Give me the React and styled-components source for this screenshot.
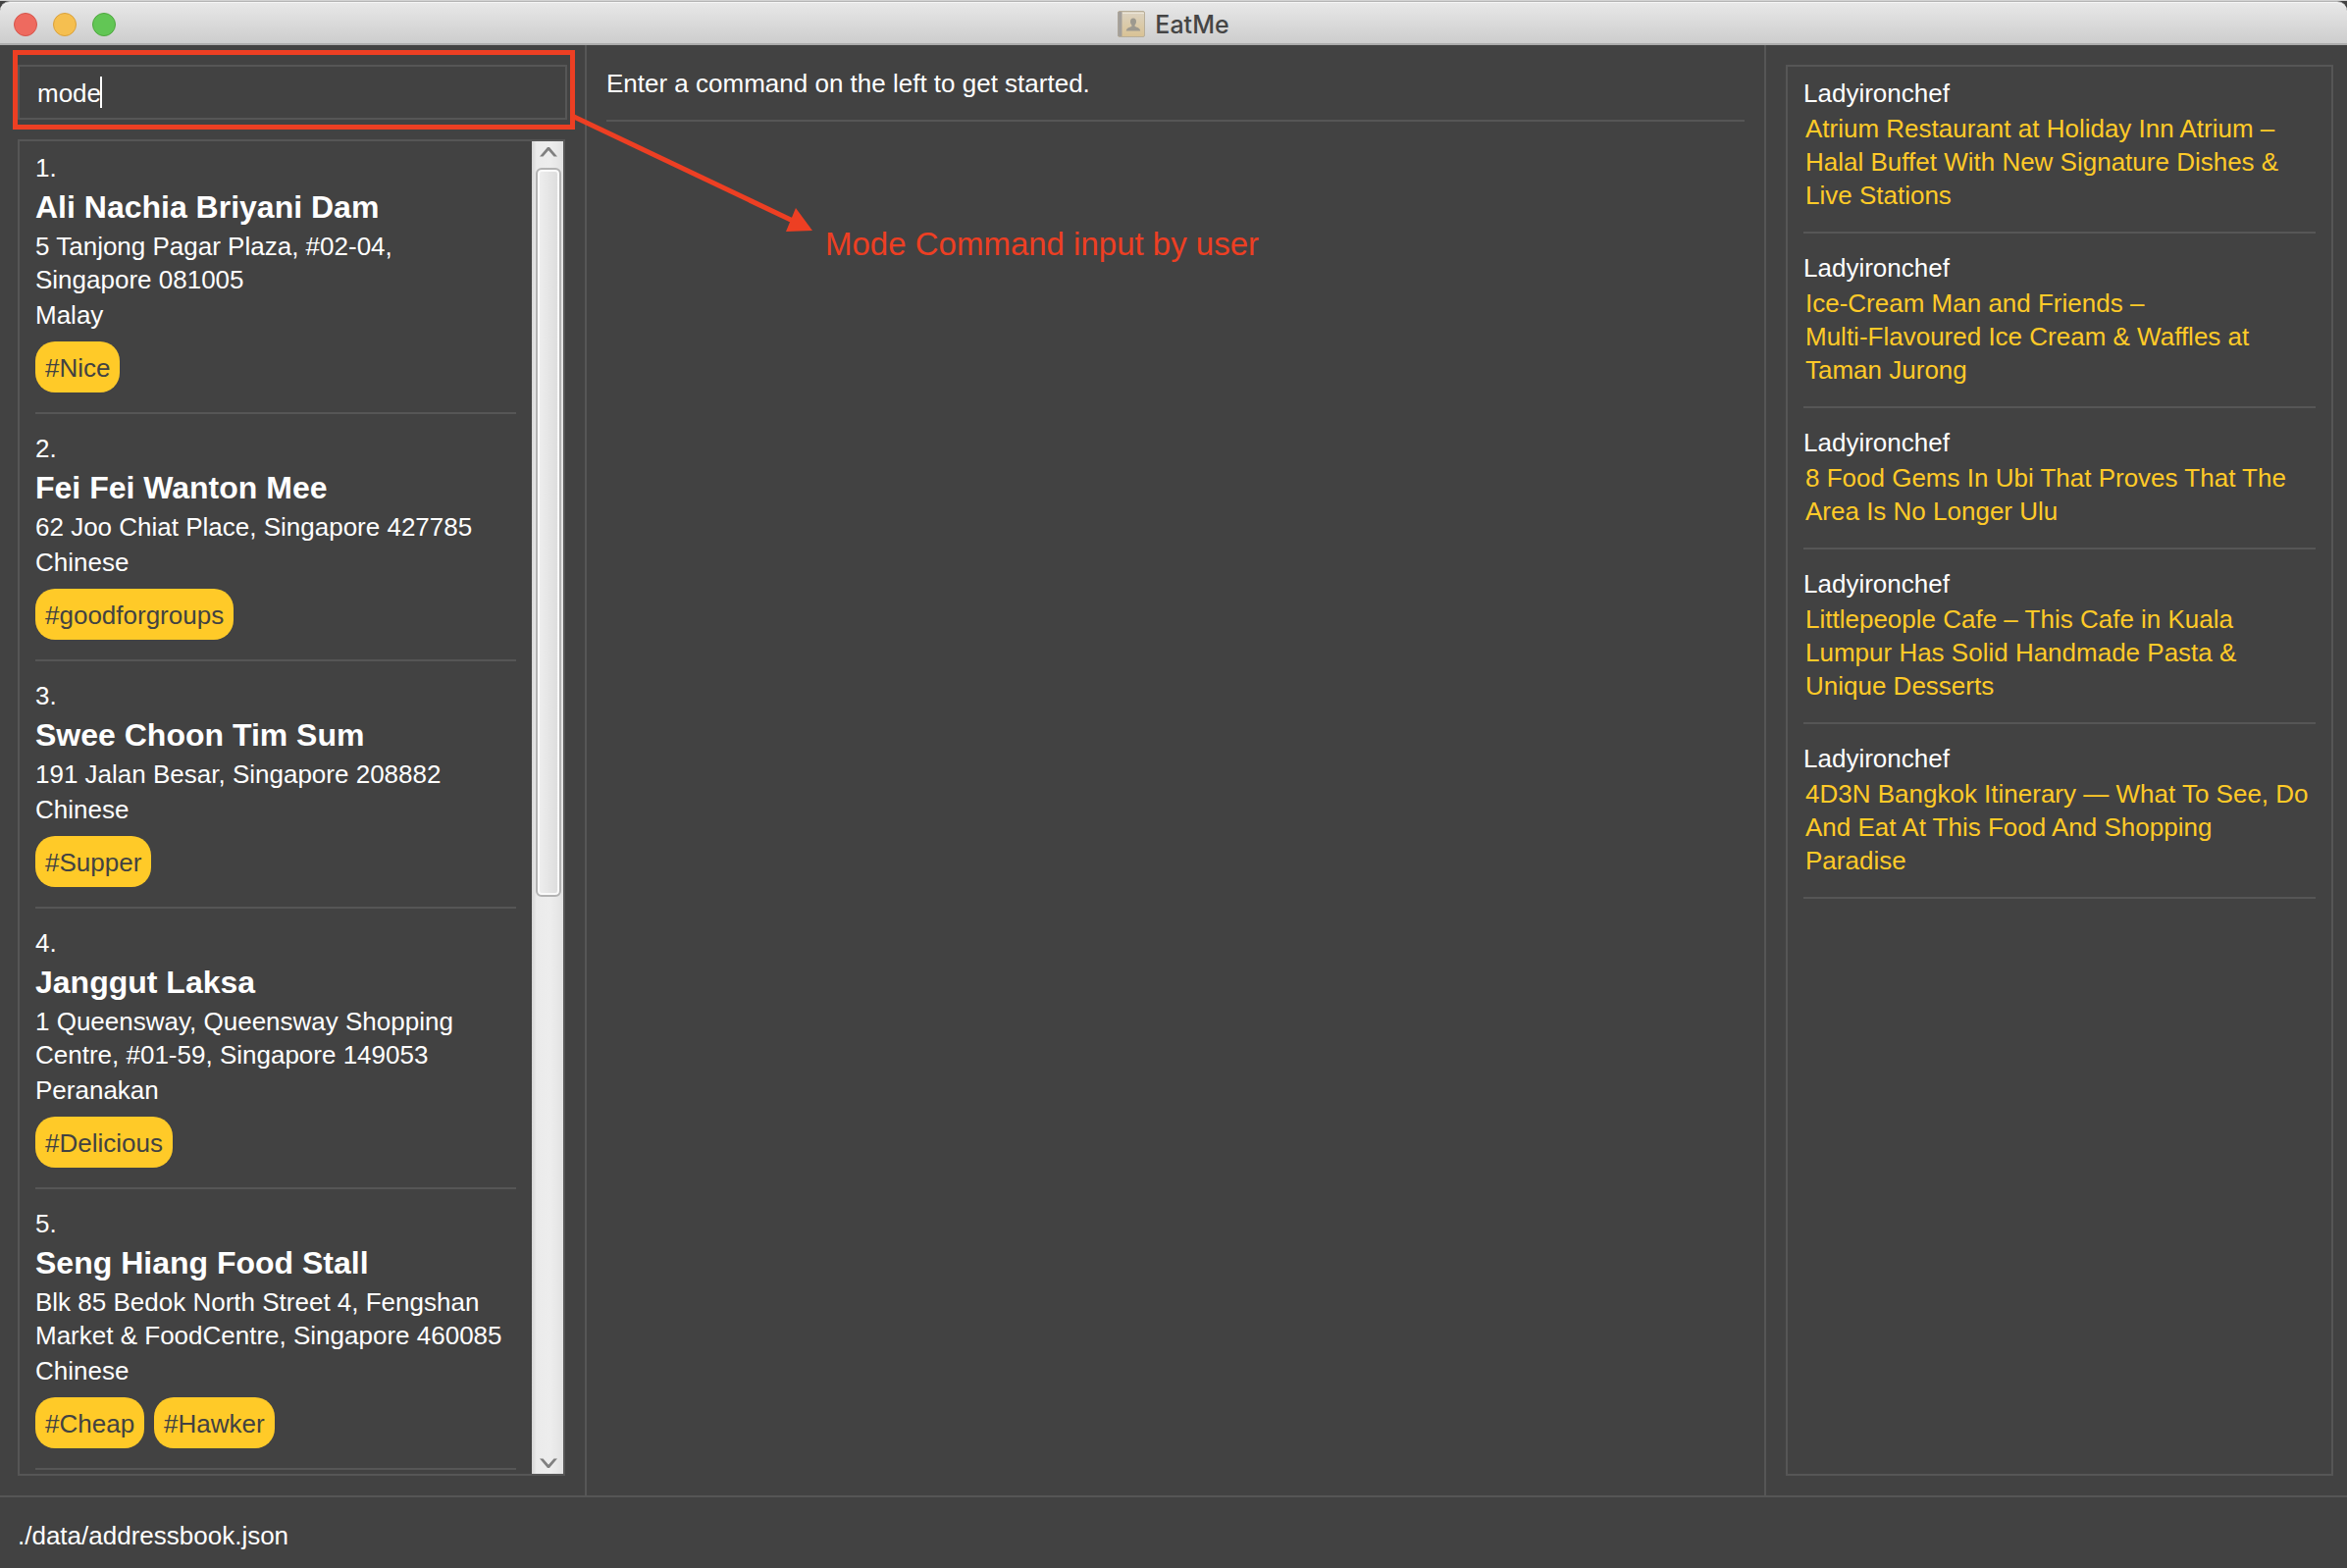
import React from "react";
import styled, { createGlobalStyle } from "styled-components";

const line = "#565656";
const red = "#ed3f23";
const amber = "#ffca28";

const GlobalStyle = createGlobalStyle`
  *, *::before, *::after { box-sizing: border-box; }
  html, body, #root { height: 100%; }
  body {
    margin: 0;
    background: #424242;
    color: #fff;
    font: 26px/34px "Liberation Sans", Arial, sans-serif;
    overflow: hidden;
  }
  ul, ol, p, h1, h2 { margin: 0; padding: 0; list-style: none; }
`;

const Window = styled.div`
  position: relative;
  display: flex;
  flex-direction: column;
  height: 100%;
  border-top: 1px solid #d2d2d2;
`;

const TitleBar = styled.header`
  display: grid;
  grid-template-columns: 1fr auto 1fr;
  align-items: center;
  height: 45px;
  padding: 3px 14px 0;
  background: linear-gradient(#e8e8e8, #cdcdcd);
  border-top: 1px solid #b4b4b4;
  border-bottom: 2px solid #acacac;
  border-radius: 10px 10px 0 0;
  box-shadow: inset 0 1px #f6f6f6;
`;

const Lights = styled.div`
  display: flex;
  gap: 16px;
`;

const Light = styled.button`
  width: 24px;
  height: 24px;
  padding: 0;
  border: 1px solid ${(p) => p.$edge};
  border-radius: 50%;
  background: ${(p) => p.$fill};
`;

const Title = styled.h1`
  display: flex;
  align-items: center;
  gap: 10px;
  color: #454545;
  font: 500 25px/34px Inter, sans-serif;
`;

const Columns = styled.main`
  flex: 1;
  min-height: 0;
  display: grid;
  grid-template-columns: 598fr 1202fr 592fr;
`;

const Column = styled.section`
  display: flex;
  flex-direction: column;
  min-width: 0;
  min-height: 0;
  padding: 20px ${(p) => p.$right}px 20px ${(p) => p.$left}px;
  border-right: ${(p) => (p.$last ? 0 : 2)}px solid ${line};
`;

const CommandField = styled.div`
  position: relative;
  margin-bottom: 20px;
`;

const CommandInput = styled.input`
  display: block;
  width: calc(100% + 2px);
  height: 56px;
  padding: 2px 18px 0;
  border: 2px solid ${line};
  outline: 0;
  background: transparent;
  caret-color: transparent;
  color: #fff;
  font: inherit;
`;

const Caret = styled.span`
  position: absolute;
  left: 84px;
  top: 12px;
  width: 2px;
  height: 32px;
  background: #fff;
`;

const Highlight = styled.div`
  position: absolute;
  inset: -15px -10px -10px -5px;
  border: 5px solid ${red};
  pointer-events: none;
`;

const Panel = styled.div`
  flex: 1;
  min-height: 0;
  display: flex;
  border: 2px solid ${line};
`;

const List = styled.ol`
  flex: 1;
  min-width: 0;
  overflow: hidden;
`;

const Item = styled.li`
  display: flex;
  flex-direction: column;
  gap: 2px;
  padding: 10px 16px 8px;
`;

const Name = styled.h2`
  font-size: 32px;
  line-height: 42px;
`;

const Address = styled.p`
  white-space: pre-line;
`;

const Tags = styled.ul`
  display: flex;
  gap: 10px;
  margin-top: 8px;
`;

const Tag = styled.li`
  padding: 10px 10px 8px;
  border-radius: 20px;
  background: ${amber};
  color: #424242;
`;

const Rule = styled.hr`
  width: 100%;
  height: 2px;
  margin: 18px 0 0;
  border: 0;
  background: ${line};
`;

const Result = styled.div`
  display: flex;
  flex-direction: column;
  gap: 2px;
  padding-top: 2px;
`;

const FeedLink = styled.a`
  padding: 0 2px;
  color: ${amber};
  text-decoration: none;
  white-space: pre-line;
`;

const ScrollBar = styled.div`
  display: flex;
  flex-direction: column;
  width: 32px;
  padding: 0 2px 0 4px;
  background: linear-gradient(90deg, #d4d4d4, #ebebeb 15%, #ededed 60%, #e2e2e2);
`;

const ScrollButton = styled.button`
  display: flex;
  align-items: ${(p) => (p.$down ? "flex-end" : "flex-start")};
  justify-content: center;
  width: 100%;
  height: 27px;
  padding: 6px 0;
  border: 0;
  background: none;
`;

const Track = styled.div`
  flex: 1;
`;

const Thumb = styled.div`
  height: 57%;
  border: 2px solid #b2b2b2;
  border-radius: 6px;
  background: linear-gradient(90deg, #efefef, #dcdcdc);
  box-shadow: inset 0 0 0 2px #fafafa;
`;

const StatusBar = styled.footer`
  height: 74px;
  padding: 22px 18px;
  border-top: 2px solid ${line};
`;

const Annotation = styled.div`
  position: absolute;
  left: 585px;
  top: 114px;
  display: flex;
  pointer-events: none;
`;

const Note = styled.p`
  margin: 114px 0 0 10px;
  color: ${red};
  font-size: 33px;
  line-height: 40px;
  white-space: nowrap;
`;

const places = [
  { name: "Ali Nachia Briyani Dam", address: "5 Tanjong Pagar Plaza, #02-04,\nSingapore 081005", kind: "Malay", tags: ["Nice"] },
  { name: "Fei Fei Wanton Mee", address: "62 Joo Chiat Place, Singapore 427785", kind: "Chinese", tags: ["goodforgroups"] },
  { name: "Swee Choon Tim Sum", address: "191 Jalan Besar, Singapore 208882", kind: "Chinese", tags: ["Supper"] },
  { name: "Janggut Laksa", address: "1 Queensway, Queensway Shopping Centre, #01-59, Singapore 149053", kind: "Peranakan", tags: ["Delicious"] },
  { name: "Seng Hiang Food Stall", address: "Blk 85 Bedok North Street 4, Fengshan Market & FoodCentre, Singapore 460085", kind: "Chinese", tags: ["Cheap", "Hawker"] },
];

const articles = [
  "Atrium Restaurant at Holiday Inn Atrium – Halal Buffet With New Signature Dishes & Live Stations",
  "Ice-Cream Man and Friends –\nMulti-Flavoured Ice Cream & Waffles at Taman Jurong",
  "8 Food Gems In Ubi That Proves That The Area Is No Longer Ulu",
  "Littlepeople Cafe – This Cafe in Kuala Lumpur Has Solid Handmade Pasta & Unique Desserts",
  "4D3N Bangkok Itinerary — What To See, Do And Eat At This Food And Shopping Paradise",
];

const BookIcon = () => (
  <svg width="28" height="27" viewBox="0 0 28 27" aria-hidden="true">
    <defs>
      <linearGradient id="cover" x1="0" y1="0" x2="0" y2="1">
        <stop offset="0" stopColor="#dcd3c2" />
        <stop offset="1" stopColor="#d9c294" />
      </linearGradient>
    </defs>
    <rect x="0.5" y="0.5" width="27" height="26" rx="1.5" fill="url(#cover)" stroke="#b8ae9a" />
    <path d="M0.5 1h4v25h-4z" fill="#a39f9b" />
    <path d="M5 2.500h22" stroke="#ebe5d8" />
    <path d="M16 7.500c-2 0-3 1.500-3 3.400 0 1.600.6 2.700 1.400 3.500v1.700c-2.400.9-5.400 1.600-5.600 4.400h14.400c-.2-2.800-3.200-3.500-5.600-4.400v-1.700c.8-.8 1.400-1.900 1.400-3.500 0-1.900-1-3.400-3-3.400z" fill="#9d998f" />
  </svg>
);

const Chevron = ({ down }) => (
  <svg width="18" height="10" viewBox="0 0 18 10" aria-hidden="true">
    <path
      d="M0 9.500L8 0h2l8 9.500h-3.500L9 3.200 3.500 9.500z"
      transform={down ? "rotate(180 9 5)" : undefined}
      fill="#808080"
    />
  </svg>
);

export default function App() {
  return (
    <Window>
      <GlobalStyle />
      <TitleBar>
        <Lights>
          <Light aria-label="Close" $fill="#ee6a5f" $edge="#d5554b" />
          <Light aria-label="Minimise" $fill="#f5bf50" $edge="#d9a13c" />
          <Light aria-label="Zoom" $fill="#62c655" $edge="#4fa73f" />
        </Lights>
        <Title>
          <BookIcon />
          EatMe
        </Title>
      </TitleBar>

      <Columns>
        <Column $left={18} $right={20}>
          <CommandField>
            <CommandInput aria-label="Command" defaultValue="mode" spellCheck={false} />
            <Caret />
            <Highlight />
          </CommandField>
          <Panel>
            <List>
              {places.map((place, i) => (
                <Item key={place.name}>
                  <p>{i + 1}.</p>
                  <Name>{place.name}</Name>
                  <Address>{place.address}</Address>
                  <p>{place.kind}</p>
                  <Tags>
                    {place.tags.map((tag) => (
                      <Tag key={tag}>#{tag}</Tag>
                    ))}
                  </Tags>
                  <Rule />
                </Item>
              ))}
            </List>
            <ScrollBar>
              <ScrollButton aria-label="Scroll up"><Chevron /></ScrollButton>
              <Track><Thumb /></Track>
              <ScrollButton aria-label="Scroll down" $down><Chevron down /></ScrollButton>
            </ScrollBar>
          </Panel>
        </Column>

        <Column $left={20} $right={20}>
          <Result>
            <p>Enter a command on the left to get started.</p>
            <Rule />
          </Result>
        </Column>

        <Column $left={20} $right={14} $last>
          <Panel>
            <List as="ul">
              {articles.map((title) => (
                <Item key={title}>
                  <p>Ladyironchef</p>
                  <FeedLink href="#">{title}</FeedLink>
                  <Rule />
                </Item>
              ))}
            </List>
          </Panel>
        </Column>
      </Columns>

      <StatusBar>./data/addressbook.json</StatusBar>

      <Annotation>
        <svg width="246" height="126" viewBox="0 0 246 126" aria-hidden="true">
          <path d="M0 4L223 110" stroke={red} strokeWidth="5" />
          <path d="M226 97L243 120L216 121z" fill={red} />
        </svg>
        <Note>Mode Command input by user</Note>
      </Annotation>
    </Window>
  );
}
